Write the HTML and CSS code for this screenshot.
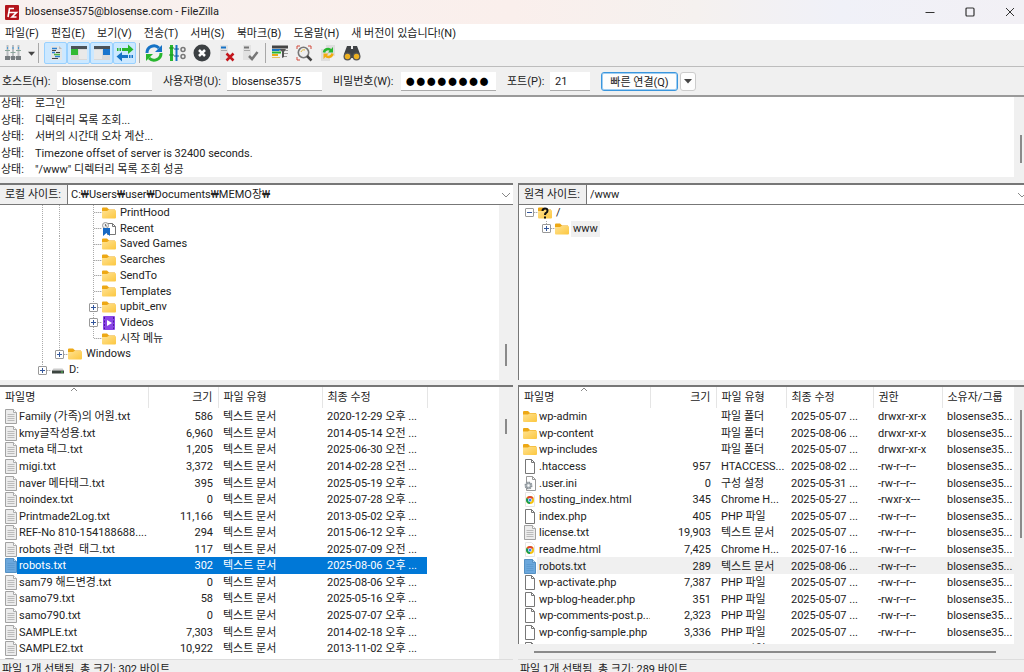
FILE: index.html
```html
<!DOCTYPE html>
<html lang="ko">
<head>
	<meta charset="utf-8">
	<meta name="viewport" content="width=device-width, initial-scale=1">
	<title>blosense3575@blosense.com - FileZilla</title>
	<link rel="stylesheet" href="styles.css">
</head>
<body>
	<!-- icons -->
	<svg class="defs" width="0" height="0">
		<linearGradient id="gold" x1="0" y1="0" x2="1" y2="1"><stop offset="0" stop-color="#ffe292"/><stop offset="1" stop-color="#fcc73f"/></linearGradient>
		<symbol id="folder" viewBox="0 0 14 13"><path d="M0 2q0-1 1-1h4l2 2h6v4H0z" fill="#eda815"/><path d="M0 4.500h5l1.500-1H13q1 0 1 1V11q0 1-1 1H1q-1 0-1-1z" fill="url(#gold)"/></symbol>
		<symbol id="text" viewBox="0 0 12 15"><path d="M.5.5h8l3 3v11H.5z" fill="#ececec" stroke="#a2a2a2"/><path d="M8.500.5v3h3" fill="#fff" stroke="#aaa"/><path d="M2.500 5.500h7M2.500 7.500h7M2.500 9.500h7M2.500 11.500h7" stroke="#bbb"/></symbol>
		<symbol id="textsel" viewBox="0 0 12 15"><path d="M.5.5h8l3 3v11H.5z" fill="#6ba7dc" stroke="#5590c2"/><path d="M8.500.5v3h3" fill="#b6d6f2" stroke="#5590c2"/><path d="M2.500 5.500h7M2.500 7.500h7M2.500 9.500h7M2.500 11.500h7" stroke="#5d9bd1"/></symbol>
		<symbol id="file" viewBox="0 0 12 15"><path d="M1.500.5h6l3 3v11h-9z" fill="#fff" stroke="#777"/><path d="M7.500.5v3h3" fill="none" stroke="#777"/></symbol>
		<symbol id="ini" viewBox="0 0 12 15"><path d="M2.500.5h6l3 3v11h-9z" fill="#fff" stroke="#999"/><path d="M8.500.5v3h3" fill="none" stroke="#999"/><circle cx="4.500" cy="9.500" r="3" fill="#ccc" stroke="#8d959b" stroke-width="2" stroke-dasharray="1.500 .8"/><circle cx="4.500" cy="9.500" r="2.500" fill="#c3cace" stroke="#8d959b"/><circle cx="4.500" cy="9.500" r="1" fill="#fff"/></symbol>
		<symbol id="chrome" viewBox="0 0 12 15"><path d="M1.500.5h6l3 3v11h-9z" fill="#fff" stroke="#e6e6e6"/><circle cx="6" cy="8" r="4" fill="#f4c20d"/><path d="M6 8L2.500 6A4 4 0 0 1 9.500 6z" fill="#db4437"/><path d="M6 8L2.500 6A4 4 0 0 0 6 12z" fill="#0f9d58"/><circle cx="6" cy="8" r="2" fill="#fff"/><circle cx="6" cy="8" r="1.500" fill="#4285f4"/></symbol>
		<symbol id="recent" viewBox="0 0 14 14"><path d="M5.500 1.500h5l3 3v8h-8z" fill="#fff" stroke="#777"/><path d="M10.500 1.500v3h3" fill="none" stroke="#777"/><circle cx="3.500" cy="3.500" r="3" fill="#eee" stroke="#999"/><path d="M3.500 2v2H5" fill="none" stroke="#777"/><path d="M1 6h7v8L4.500 11 1 14z" fill="#1769c4"/></symbol>
		<symbol id="video" viewBox="0 0 14 14"><rect x="1" width="12" height="14" rx="1" fill="#8a45e6"/><path d="M2.500 1v12M11.500 1v12" stroke="#4b1b99" stroke-dasharray="2 1.500"/><path d="M5 4l5 3-5 3z" fill="#fff"/></symbol>
		<symbol id="drive" viewBox="0 0 14 13"><path d="M2.500 5h9L13 7H1z" fill="#ccc"/><rect x="1" y="7" width="12" height="3" fill="#3c4440"/><path d="M10 8.500h2" stroke="#5c5"/></symbol>
		<symbol id="unknown" viewBox="0 0 14 13"><use href="#folder"/><path d="M4.500 4.500Q4.500 2 7 2t2.500 2.200Q9.500 5.500 8 6.500 7 7 7 8.500M7 10v2" fill="none" stroke="#111" stroke-width="2"/></symbol>
		<symbol id="down" viewBox="0 0 8 8"><path d="M0 2h8L4 6.500z" fill="#444"/></symbol>
		<symbol id="chevron" viewBox="0 0 10 6"><path d="M1 1l4 4 4-4" fill="none" stroke="#888"/></symbol>
		<symbol id="sort" viewBox="0 0 8 5"><path d="M1 4l3-3 3 3" fill="none" stroke="#888"/></symbol>
	</svg>

	<header class="titlebar">
		<svg class="logo" viewBox="0 0 14 15"><rect width="14" height="15" rx="1" fill="#b3131a"/><path d="M3 12l1.500-8.500H9M4 7.500h3.500M7.500 7.500h4L7 12h4.500" fill="none" stroke="#fff" stroke-width="1.600"/></svg>
		<h1>blosense3575@blosense.com - FileZilla</h1>
		<button aria-label="최소화"><svg viewBox="0 0 10 10"><path d="M.5 5.500h9" stroke="#333"/></svg></button>
		<button aria-label="최대화"><svg viewBox="0 0 10 10"><rect x="1" y="1" width="8" height="8" rx="1" fill="none" stroke="#333" stroke-width="1.200"/></svg></button>
		<button aria-label="닫기"><svg viewBox="0 0 10 10"><path d="M1 1l8 8M9 1L1 9" stroke="#333"/></svg></button>
	</header>

	<nav class="menubar">
		<button>파일(F)</button>
		<button>편집(E)</button>
		<button>보기(V)</button>
		<button>전송(T)</button>
		<button>서버(S)</button>
		<button>북마크(B)</button>
		<button>도움말(H)</button>
		<button>새 버전이 있습니다!(N)</button>
	</nav>

	<div class="toolbar">
		<button aria-label="사이트 관리자"><svg viewBox="0 0 18 18"><path d="M3.500 1v11M9 1v11M14.500 1v11M1 13.500h16" stroke="#b9bdc0" stroke-width="2"/><path d="M1 6.500h5M6.500 8.500h5M12 6.500h5" stroke="#8aa69a"/><path d="M1 12h5v4H1zM7 12h4v4H7zM12 12h5v4h-5z" fill="#777d80"/><path d="M3 4h1M8.500 4h1M14 4h1" stroke="#4b9bd8" stroke-width="2"/></svg></button>
		<button class="arrow" aria-label="사이트 목록"><svg viewBox="0 0 8 8"><use href="#down"/></svg></button>
		<i class="sep"></i>
		<button class="on" aria-label="메시지 로그"><svg viewBox="0 0 18 18"><path d="M4 2h8l3 3v11H4z" fill="#e3e5e6"/><path d="M12 2v3h3z" fill="#bbb"/><path d="M5 4.500h5M5 8.500h3M8 12.500h5" stroke="#2b7fd0" stroke-width="1.500"/><path d="M5 6.500h4M9 8.500h4M5 14.500h6" stroke="#444"/><path d="M7 10.500h6" stroke="#4cb944" stroke-width="1.500"/></svg></button>
		<button class="on" aria-label="로컬 트리"><svg viewBox="0 0 18 18"><path d="M1 2h16v14H1z" fill="#d9d9d9"/><path d="M1 2h16v3H1z" fill="#4b5258"/><path d="M1 5h7v6H1z" fill="#30ba34"/><path d="M9 6h8v9H9z" fill="#e9e9e9"/></svg></button>
		<button class="on" aria-label="원격 트리"><svg viewBox="0 0 18 18"><path d="M1 2h16v14H1z" fill="#d9d9d9"/><path d="M1 2h16v3H1z" fill="#4b5258"/><path d="M10 5h7v6h-7z" fill="#1a75cd"/><path d="M1 6h8v9H1z" fill="#e9e9e9"/></svg></button>
		<button class="on" aria-label="전송 대기열"><svg viewBox="0 0 18 18"><path d="M1 4h11V.5L17.500 5.500 12 10V7H1z" fill="#28b62e"/><path d="M17 11H6V8L.5 12.500 6 17.500V14h11z" fill="#1673c6"/><path d="M3 3.500v4M5.500 3.500v4M12.500 10.500v4M15 10.500v4" stroke="#cce8ff"/></svg></button>
		<i class="sep"></i>
		<button aria-label="새로 고침"><svg viewBox="0 0 18 18"><path d="M2 9a7 7 0 0 1 12-5" fill="none" stroke="#1673c6" stroke-width="3"/><path d="M17 1v7h-7z" fill="#1673c6"/><path d="M16 9a7 7 0 0 1-12 5" fill="none" stroke="#28b62e" stroke-width="3"/><path d="M1 17v-7h7z" fill="#28b62e"/></svg></button>
		<button aria-label="대기열 처리"><svg viewBox="0 0 18 18"><path d="M2.500 1v16" stroke="#28b62e" stroke-width="3"/><path d="M7.500 1v16" stroke="#1673c6" stroke-width="2"/><path d="M0 4h5M0 11h5" stroke="#1d8f24"/><path d="M5 5h5M5 12h5" stroke="#115ba0"/><circle cx="14" cy="5.500" r="2" fill="none" stroke="#777" stroke-width="1.500"/><circle cx="14" cy="12.500" r="2" fill="none" stroke="#777" stroke-width="1.500"/></svg></button>
		<button aria-label="취소"><svg viewBox="0 0 18 18"><circle cx="9" cy="9" r="8.500" fill="#3c4043"/><path d="M6 6l6 6M12 6l-6 6" stroke="#fff" stroke-width="2.500"/></svg></button>
		<button aria-label="연결 끊기"><svg viewBox="0 0 18 18"><path d="M3 1h8v15H3z" fill="#e2e2e2"/><path d="M4 3.500h5" stroke="#1673c6" stroke-width="2"/><path d="M4 6.500h6" stroke="#aaa"/><path d="M9.500 9.500l7 7M16.500 9.500l-7 7" stroke="#c3161c" stroke-width="2.500"/></svg></button>
		<button aria-label="다시 연결"><svg viewBox="0 0 18 18"><path d="M2 1h8v15H2z" fill="#e2e2e2"/><path d="M3 3.500h5" stroke="#777" stroke-width="2"/><path d="M3 6.500h6" stroke="#aaa"/><path d="M8 12l3 3 5.500-7" fill="none" stroke="#777" stroke-width="2.500"/></svg></button>
		<i class="sep"></i>
		<button aria-label="필터"><svg viewBox="0 0 18 18"><path d="M1 3h16" stroke="#444" stroke-width="3"/><path d="M1 6h9" stroke="#1673c6" stroke-width="2"/><path d="M1 8.500h9" stroke="#28b62e" stroke-width="2"/><path d="M1 11h6" stroke="#e8aa16" stroke-width="2"/><path d="M1 13.500h8" stroke="#e6c260"/><path d="M8 6.500h9M11 9.500h6M11 12.500h5" stroke="#999"/><path d="M9 5h6l-2 3v5l-2 1V8z" fill="#555"/></svg></button>
		<button aria-label="비교"><svg viewBox="0 0 18 18"><path d="M2 2h3M2 2v3M13 2h3v3M2 13v3h3" fill="none" stroke="#d24a3c"/><circle cx="8.500" cy="8.500" r="5.200" fill="#eee" stroke="#777" stroke-width="1.600"/><path d="M6 8a3 3 0 0 1 4-2" fill="none" stroke="#e8b92c"/><path d="M12 12l4.500 4.500" stroke="#444" stroke-width="2.500"/></svg></button>
		<button aria-label="동기화 탐색"><svg viewBox="0 0 18 18"><path d="M7 1h9v11H7zM2 5h9v12H2z" fill="#dedede"/><path d="M5 8.500a4 4 0 0 1 7-2" fill="none" stroke="#28b62e" stroke-width="2.500"/><path d="M14 3v5.500H9z" fill="#28b62e"/><path d="M13.500 9.500a4 4 0 0 1-7 2" fill="none" stroke="#f0ac10" stroke-width="2.500"/><path d="M4.500 15V9.500h5z" fill="#f0ac10"/></svg></button>
		<button aria-label="파일 검색"><svg viewBox="0 0 18 18"><path d="M4 2h4v3h2V2h4l3 8v4H1v-4z" fill="#3f4245"/><circle cx="4.500" cy="12.500" r="4" fill="#555"/><circle cx="13.500" cy="12.500" r="4" fill="#555"/><circle cx="4.500" cy="12.500" r="2.700" fill="#eeb120"/><circle cx="13.500" cy="12.500" r="2.700" fill="#eeb120"/></svg></button>
	</div>

	<form class="quickconnect" onsubmit="return false">
		<label for="host">호스트(H):</label>
		<input id="host" type="text" value="blosense.com">
		<label for="user">사용자명(U):</label>
		<input id="user" type="text" value="blosense3575">
		<label for="pass">비밀번호(W):</label>
		<input id="pass" type="password" value="blosense">
		<label for="port">포트(P):</label>
		<input id="port" class="port" type="text" value="21">
		<button class="connect">빠른 연결(Q)</button>
		<button class="history" type="button" aria-label="최근 연결"><svg viewBox="0 0 8 8"><use href="#down"/></svg></button>
	</form>

	<section class="log">
		<dl>
			<dt>상태:</dt><dd>로그인</dd>
			<dt>상태:</dt><dd>디렉터리 목록 조회...</dd>
			<dt>상태:</dt><dd>서버의 시간대 오차 계산...</dd>
			<dt>상태:</dt><dd>Timezone offset of server is 32400 seconds.</dd>
			<dt>상태:</dt><dd>"/www" 디렉터리 목록 조회 성공</dd>
		</dl>
		<div class="track"><i></i></div>
	</section>

	<main class="panes">
		<section class="pane local">
			<div class="path">
				<label for="lpath">로컬 사이트:</label>
				<select id="lpath"><option>C:₩Users₩user₩Documents₩MEMO장₩</option></select>
				<svg viewBox="0 0 10 6"><use href="#chevron"/></svg>
			</div>
			<div class="tree">
				<ul>
					<li><i class="v"></i><i class="v"></i><i></i><i class="v h"></i><svg><use href="#folder"/></svg><span>PrintHood</span></li>
					<li><i class="v"></i><i class="v"></i><i></i><i class="v h"></i><svg><use href="#recent"/></svg><span>Recent</span></li>
					<li><i class="v"></i><i class="v"></i><i></i><i class="v h"></i><svg><use href="#folder"/></svg><span>Saved Games</span></li>
					<li><i class="v"></i><i class="v"></i><i></i><i class="v h"></i><svg><use href="#folder"/></svg><span>Searches</span></li>
					<li><i class="v"></i><i class="v"></i><i></i><i class="v h"></i><svg><use href="#folder"/></svg><span>SendTo</span></li>
					<li><i class="v"></i><i class="v"></i><i></i><i class="v h"></i><svg><use href="#folder"/></svg><span>Templates</span></li>
					<li><i class="v"></i><i class="v"></i><i></i><i class="v h"><button class="plus" aria-label="펼치기"></button></i><svg><use href="#folder"/></svg><span>upbit_env</span></li>
					<li><i class="v"></i><i class="v"></i><i></i><i class="v h"><button class="plus" aria-label="펼치기"></button></i><svg><use href="#video"/></svg><span>Videos</span></li>
					<li><i class="v"></i><i class="v"></i><i></i><i class="v h end"></i><svg><use href="#folder"/></svg><span>시작 메뉴</span></li>
					<li><i class="v"></i><i class="v h end"><button class="plus" aria-label="펼치기"></button></i><svg><use href="#folder"/></svg><span>Windows</span></li>
					<li><i class="v h end"><button class="plus" aria-label="펼치기"></button></i><svg><use href="#drive"/></svg><span>D:</span></li>
				</ul>
				<div class="track"><i></i></div>
			</div>
			<div class="files">
				<div class="rows">
				<table>
					<colgroup><col class="c1"><col class="c2"><col class="c3"><col class="c4"></colgroup>
					<thead><tr><th>파일명<svg viewBox="0 0 8 5"><use href="#sort"/></svg></th><th>크기</th><th>파일 유형</th><th>최종 수정</th></tr></thead>
					<tbody>
						<tr><td><svg><use href="#text"/></svg>Family (가족)의 어원.txt</td><td>586</td><td>텍스트 문서</td><td>2020-12-29 오후 ...</td></tr>
						<tr><td><svg><use href="#text"/></svg>kmy글작성용.txt</td><td>6,960</td><td>텍스트 문서</td><td>2014-05-14 오전 ...</td></tr>
						<tr><td><svg><use href="#text"/></svg>meta 태그.txt</td><td>1,205</td><td>텍스트 문서</td><td>2025-06-30 오전 ...</td></tr>
						<tr><td><svg><use href="#text"/></svg>migi.txt</td><td>3,372</td><td>텍스트 문서</td><td>2014-02-28 오전 ...</td></tr>
						<tr><td><svg><use href="#text"/></svg>naver 메타태그.txt</td><td>395</td><td>텍스트 문서</td><td>2025-05-19 오후 ...</td></tr>
						<tr><td><svg><use href="#text"/></svg>noindex.txt</td><td>0</td><td>텍스트 문서</td><td>2025-07-28 오후 ...</td></tr>
						<tr><td><svg><use href="#text"/></svg>Printmade2Log.txt</td><td>11,166</td><td>텍스트 문서</td><td>2013-05-02 오후 ...</td></tr>
						<tr><td><svg><use href="#text"/></svg>REF-No 810-154188688....</td><td>294</td><td>텍스트 문서</td><td>2015-06-12 오후 ...</td></tr>
						<tr><td><svg><use href="#text"/></svg>robots 관련&nbsp; 태그.txt</td><td>117</td><td>텍스트 문서</td><td>2025-07-09 오전 ...</td></tr>
						<tr class="selected"><td><svg><use href="#textsel"/></svg>robots.txt</td><td>302</td><td>텍스트 문서</td><td>2025-08-06 오후 ...</td></tr>
						<tr><td><svg><use href="#text"/></svg>sam79 해드변경.txt</td><td>0</td><td>텍스트 문서</td><td>2025-08-06 오후 ...</td></tr>
						<tr><td><svg><use href="#text"/></svg>samo79.txt</td><td>58</td><td>텍스트 문서</td><td>2025-05-16 오후 ...</td></tr>
						<tr><td><svg><use href="#text"/></svg>samo790.txt</td><td>0</td><td>텍스트 문서</td><td>2025-07-07 오후 ...</td></tr>
						<tr><td><svg><use href="#text"/></svg>SAMPLE.txt</td><td>7,303</td><td>텍스트 문서</td><td>2014-02-18 오후 ...</td></tr>
						<tr><td><svg><use href="#text"/></svg>SAMPLE2.txt</td><td>10,922</td><td>텍스트 문서</td><td>2013-11-02 오후 ...</td></tr>
						<tr><td><svg><use href="#text"/></svg></td><td></td><td></td><td></td></tr>
					</tbody>
				</table>
				</div>
				<div class="track"><i></i></div>
			</div>
			<footer>파일 1개 선택됨. 총 크기: 302 바이트</footer>
		</section>

		<section class="pane remote">
			<div class="path">
				<label for="rpath">원격 사이트:</label>
				<select id="rpath"><option>/www</option></select>
				<svg viewBox="0 0 10 6"><use href="#chevron"/></svg>
			</div>
			<div class="tree">
				<ul>
					<li><i class="h"><button class="minus" aria-label="접기"></button></i><svg><use href="#unknown"/></svg><span>/</span></li>
					<li><i></i><i class="v h end"><button class="plus" aria-label="펼치기"></button></i><svg><use href="#folder"/></svg><span class="current">www</span></li>
				</ul>
			</div>
			<div class="files">
				<div class="rows">
				<table>
					<colgroup><col class="c1"><col class="c2"><col class="c3"><col class="c4"><col class="c5"><col class="c6"></colgroup>
					<thead><tr><th>파일명<svg viewBox="0 0 8 5"><use href="#sort"/></svg></th><th>크기</th><th>파일 유형</th><th>최종 수정</th><th>권한</th><th>소유자/그룹</th></tr></thead>
					<tbody>
						<tr><td><svg><use href="#folder"/></svg>wp-admin</td><td></td><td>파일 폴더</td><td>2025-05-07 ...</td><td>drwxr-xr-x</td><td>blosense35...</td></tr>
						<tr><td><svg><use href="#folder"/></svg>wp-content</td><td></td><td>파일 폴더</td><td>2025-08-06 ...</td><td>drwxr-xr-x</td><td>blosense35...</td></tr>
						<tr><td><svg><use href="#folder"/></svg>wp-includes</td><td></td><td>파일 폴더</td><td>2025-05-07 ...</td><td>drwxr-xr-x</td><td>blosense35...</td></tr>
						<tr><td><svg><use href="#file"/></svg>.htaccess</td><td>957</td><td>HTACCESS...</td><td>2025-08-02 ...</td><td>-rw-r--r--</td><td>blosense35...</td></tr>
						<tr><td><svg><use href="#ini"/></svg>.user.ini</td><td>0</td><td>구성 설정</td><td>2025-05-31 ...</td><td>-rw-r--r--</td><td>blosense35...</td></tr>
						<tr><td><svg><use href="#chrome"/></svg>hosting_index.html</td><td>345</td><td>Chrome H...</td><td>2025-05-27 ...</td><td>-rwxr-x---</td><td>blosense35...</td></tr>
						<tr><td><svg><use href="#file"/></svg>index.php</td><td>405</td><td>PHP 파일</td><td>2025-05-07 ...</td><td>-rw-r--r--</td><td>blosense35...</td></tr>
						<tr><td><svg><use href="#text"/></svg>license.txt</td><td>19,903</td><td>텍스트 문서</td><td>2025-05-07 ...</td><td>-rw-r--r--</td><td>blosense35...</td></tr>
						<tr><td><svg><use href="#chrome"/></svg>readme.html</td><td>7,425</td><td>Chrome H...</td><td>2025-07-16 ...</td><td>-rw-r--r--</td><td>blosense35...</td></tr>
						<tr class="marked"><td><svg><use href="#textsel"/></svg>robots.txt</td><td>289</td><td>텍스트 문서</td><td>2025-08-06 ...</td><td>-rw-r--r--</td><td>blosense35...</td></tr>
						<tr><td><svg><use href="#file"/></svg>wp-activate.php</td><td>7,387</td><td>PHP 파일</td><td>2025-05-07 ...</td><td>-rw-r--r--</td><td>blosense35...</td></tr>
						<tr><td><svg><use href="#file"/></svg>wp-blog-header.php</td><td>351</td><td>PHP 파일</td><td>2025-05-07 ...</td><td>-rw-r--r--</td><td>blosense35...</td></tr>
						<tr><td><svg><use href="#file"/></svg>wp-comments-post.p...</td><td>2,323</td><td>PHP 파일</td><td>2025-05-07 ...</td><td>-rw-r--r--</td><td>blosense35...</td></tr>
						<tr><td><svg><use href="#file"/></svg>wp-config-sample.php</td><td>3,336</td><td>PHP 파일</td><td>2025-05-07 ...</td><td>-rw-r--r--</td><td>blosense35...</td></tr>
						<tr><td><svg><use href="#file"/></svg>wp-config.php</td><td></td><td>PHP 파일</td><td></td><td></td><td>blosense35...</td></tr>
					</tbody>
				</table>
				</div>
				<div class="track"><i></i></div>
			</div>
			<div class="hscroll"><i></i></div>
			<footer>파일 1개 선택됨. 총 크기: 289 바이트</footer>
		</section>
	</main>
</body>
</html>
```
FILE: styles.css
```css
*{
	box-sizing: border-box;
}
body{
	margin: 0;
	height: 100vh;
	overflow: hidden;
	display: flex;
	flex-direction: column;
	background: #f0f0f0;
	color: #222;
	font-family: Roboto, "Noto Sans CJK KR", sans-serif;
	font-size: 11px;
	line-height: 16px;
	white-space: nowrap;
}
button, input, select{
	margin: 0;
	padding: 0;
	border: 0;
	background: none;
	color: inherit;
	font: inherit;
}
svg{
	display: block;
	flex: none;
}
.defs{
	position: absolute;
}

/* title and menu */
.titlebar{
	flex: none;
	height: 24px;
	display: flex;
	align-items: center;
	padding-left: 5px;
	background: linear-gradient(to right, #f8f1ef, #faefec 50%, #f5f1ef 68%, #f0f1f8 82%, #f2f0f5);
}
.logo{
	width: 14px;
	height: 15px;
}
.titlebar h1{
	flex: 1;
	margin: 0 0 0 6px;
	font-size: 11px;
	font-weight: normal;
}
.titlebar button{
	width: 40px;
	height: 20px;
	display: flex;
	justify-content: center;
	align-items: center;
}
.titlebar button svg{
	width: 10px;
	height: 10px;
}
.titlebar button:last-child{
	width: 28px;
	margin-left: 6px;
}
.menubar{
	flex: none;
	height: 16px;
	display: flex;
	gap: 12px;
	padding-left: 5px;
	background: #fff;
}
.menubar button{
	padding-top: 3px;
	line-height: 13px;
}

/* toolbar */
.toolbar{
	flex: none;
	height: 27px;
	display: flex;
	align-items: center;
	padding-left: 1px;
	border-bottom: 1px solid #bdbdbd;
}
.toolbar button{
	width: 24px;
	height: 22px;
	display: flex;
	justify-content: center;
	align-items: center;
}
.toolbar svg{
	width: 18px;
	height: 18px;
}
.toolbar .arrow{
	width: 12px;
}
.toolbar .arrow svg{
	width: 7px;
	height: 7px;
}
.history svg{
	width: 8px;
	height: 8px;
}
.toolbar .on{
	width: 23px;
	background: #cce8ff;
	border: 1px solid #99d1ff;
	border-radius: 2px;
}
.sep{
	width: 1px;
	height: 20px;
	margin: 0 2px 0 3px;
	background: #a8a8a8;
}
.sep:first-of-type{
	margin: 0 5px 0 1px;
}

/* quickconnect */
.quickconnect{
	flex: none;
	height: 30px;
	display: flex;
	align-items: center;
	padding-left: 2px;
	border-bottom: 2px solid #9a9a9a;
}
.quickconnect label{
	width: 55px;
	padding-top: 2px;
}
.quickconnect input{
	width: 95px;
	height: 19px;
	margin-right: 11px;
	padding: 2px 5px 0;
	background: #fff;
	border-bottom: 1px solid #aaa;
}
.quickconnect #host + label{
	width: 64px;
}
.quickconnect #user + label{
	width: 68px;
}
.quickconnect #pass{
	padding: 0 4px 6px;
	color: #000;
	font-family: "Noto Sans CJK KR", sans-serif;
	font-size: 31px;
	line-height: 18px;
}
.quickconnect #pass + label{
	width: 43px;
}
.quickconnect .port{
	width: 40px;
}
.quickconnect button{
	height: 19px;
	background: #fdfdfd;
	border: 1px solid #ccc;
	border-radius: 3px;
}
.quickconnect .connect{
	width: 77px;
	margin-right: 2px;
	padding-top: 2px;
	line-height: 15px;
	border: 1px solid #3a96dd;
	box-shadow: inset 0 0 0 1px #9fcdf2;
}
.quickconnect .history{
	width: 16px;
	display: flex;
	justify-content: center;
	align-items: center;
}

/* message log */
.log{
	flex: none;
	height: 80px;
	display: flex;
	align-items: flex-end;
	background: #fff;
	overflow: hidden;
}
.log dl{
	flex: 1;
	height: 83px;
	margin: 0;
	padding-left: 1px;
	display: grid;
	grid-template-columns: 34px 1fr;
	grid-template-rows: repeat(5, 1fr);
	line-height: 20px;
}
.log dt, .log dd{
	margin: 0;
	min-height: 0;
}
.track{
	flex: none;
	width: 14px;
	align-self: stretch;
	background: #f0f0f0;
}
.track i{
	display: block;
	width: 2px;
	height: 22px;
	margin: 0 auto;
	background: #8a8a8a;
}
.log .track{
	width: 10px;
}
.log .track i{
	height: 28px;
	margin: 38px 2px 0 auto;
}

/* two panes */
.panes{
	flex: 1;
	min-height: 0;
	margin-top: 6px;
	display: grid;
	grid-template-columns: minmax(0, 513fr) minmax(0, 506fr);
	gap: 5px;
}
.pane{
	min-height: 0;
	display: flex;
	flex-direction: column;
}
.path{
	flex: none;
	height: 22px;
	display: flex;
	align-items: center;
	position: relative;
	background: #fff;
	border-top: 2px solid #777;
	border-bottom: 1px solid #777;
}
.path label{
	width: 68px;
	height: 19px;
	padding-left: 5px;
	line-height: 20px;
	background: #f0f0f0;
	border-right: 1px solid #777;
}
.path select{
	flex: 1;
	appearance: none;
	padding-left: 3px;
}
.path svg{
	position: absolute;
	right: 2px;
	width: 10px;
	height: 6px;
}
.remote .path svg{
	right: -3px;
}
.remote .path, .remote .tree, .remote .files{
	border-left: 1px solid #777;
}

/* directory trees */
.tree{
	flex: none;
	height: 175px;
	display: flex;
	background: #fff;
}
.tree ul{
	flex: 1;
	height: 173px;
	margin: 0;
	padding: 0 0 0 34px;
	list-style: none;
	display: grid;
	grid-template-rows: repeat(11, 1fr);
}
.remote .tree ul{
	padding-left: 2px;
}
.tree li{
	display: flex;
	align-items: center;
	min-height: 0;
}
.tree li > i{
	--dots: repeating-linear-gradient(#aaa 0 1px, #fff 1px 2px);
	--dash: repeating-linear-gradient(to right, #aaa 0 1px, #ddd 1px 2px);
	width: 17px;
	height: 100%;
	display: flex;
	justify-content: center;
	align-items: center;
}
.tree .v{
	background: var(--dots) 8px 0 / 1px 100% no-repeat;
}
.tree .h{
	background: var(--dash) 9px 50% / 8px 1px no-repeat;
}
.tree .v.h{
	background: var(--dots) 8px 0 / 1px 100% no-repeat, var(--dash) 9px 50% / 8px 1px no-repeat;
}
.tree .v.h.end{
	background: var(--dots) 8px 0 / 1px 50% no-repeat, var(--dash) 9px 50% / 8px 1px no-repeat;
}
.plus, .minus{
	width: 9px;
	height: 9px;
	background: linear-gradient(#34579c, #34579c) center / 5px 1px no-repeat, #fff;
	border-radius: 1px;
}
.plus{
	background: linear-gradient(#34579c, #34579c) center / 5px 1px no-repeat, linear-gradient(#34579c, #34579c) center / 1px 5px no-repeat, #fff;
}
.tree button{
	border: 1px solid #999;
}
.tree li svg{
	width: 14px;
	height: 14px;
}
.tree span{
	margin-left: 2px;
	padding: 0 2px;
}
.tree .current{
	background: #f0f0f0;
}
.tree .track i{
	margin-top: 139px;
}

/* file lists */
.files{
	flex: 1;
	min-height: 0;
	margin-top: 5px;
	display: flex;
	background: #fff;
	border-top: 2px solid #777;
}
.rows{
	flex: 1;
	min-width: 0;
	overflow: hidden;
}
.files table{
	width: 427px;
	height: 286px;
	table-layout: fixed;
	border-collapse: collapse;
}
.files th{
	position: relative;
	height: 21px;
	padding: 0 5px;
	font-weight: normal;
	text-align: left;
	border-right: 1px solid #e5e5e5;
}
.files th svg{
	position: absolute;
	top: 0;
	left: 50%;
	width: 8px;
	height: 5px;
	margin-left: -4px;
}
.files td{
	padding: 2px 5px 0;
	line-height: 14px;
	overflow: hidden;
}
.files th:nth-child(2), .files td:nth-child(2){
	text-align: right;
}
.files td:first-child{
	padding: 2px 0 0 5px;
}
.files td svg{
	display: inline-block;
	width: 12px;
	height: 15px;
	margin: -1px 2px 0 0;
	vertical-align: top;
}
.local .c1{
	width: 148px;
}
.local .c2{
	width: 70px;
}
.local .c3{
	width: 104px;
}
.local .c4{
	width: 105px;
}
.remote table{
	width: 495px;
	height: 270px;
}
.remote .c1{
	width: 131px;
}
.remote .c2{
	width: 66px;
}
.remote .c3{
	width: 70px;
}
.remote .c4{
	width: 87px;
}
.remote .c5{
	width: 69px;
}
.remote .c6{
	width: 72px;
}
.remote td svg{
	width: 14px;
}
.remote td:first-child{
	padding-left: 4px;
}
.remote th:last-child{
	border-right: 0;
}
.selected{
	color: #fff;
	background: #0078d7;
}
.selected td:first-child{
	background: linear-gradient(to right, #fff 17px, #0078d7 17px);
}
.marked{
	background: #f0f0f0;
}
.marked td:first-child{
	background: linear-gradient(to right, #fff 18px, #f0f0f0 18px);
}
.files .track i{
	height: 15px;
	margin-top: 32px;
}
.remote .files .track{
	width: 10px;
}
.remote .files .track i{
	height: 128px;
	margin: 23px 2px 0 auto;
}
.hscroll{
	flex: none;
	height: 15px;
	padding: 7px 28px 0 16px;
}
.hscroll i{
	display: block;
	height: 2px;
	background: #8a8a8a;
}
footer{
	flex: none;
	height: 13px;
	padding: 2px 0 0 2px;
	overflow: hidden;
	border-top: 1px solid #ddd;
}
```
